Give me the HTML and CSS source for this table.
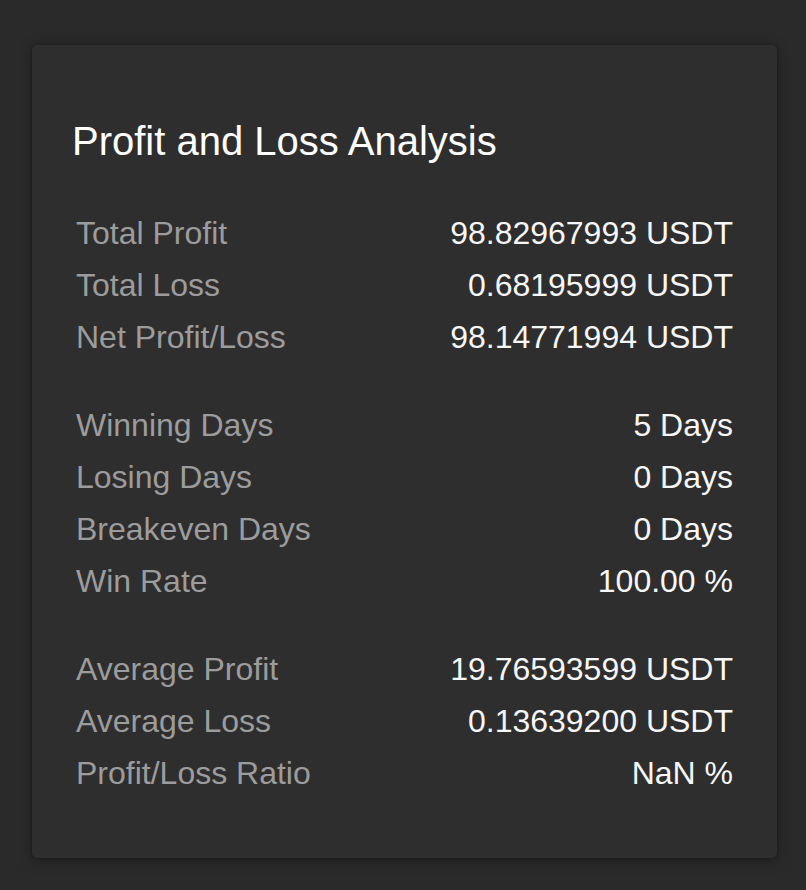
FILE: index.html
```html
<!DOCTYPE html>
<html lang="en">
<head>
<meta charset="utf-8">
<title>Profit and Loss Analysis</title>
<link rel="stylesheet" href="styles.css">
</head>
<body>
<section class="card">
  <h2 class="card-title">Profit and Loss Analysis</h2>
  <div class="groups">
    <dl class="group">
      <div class="row"><dt>Total Profit</dt><dd>98.82967993 USDT</dd></div>
      <div class="row"><dt>Total Loss</dt><dd>0.68195999 USDT</dd></div>
      <div class="row"><dt>Net Profit/Loss</dt><dd>98.14771994 USDT</dd></div>
    </dl>
    <dl class="group">
      <div class="row"><dt>Winning Days</dt><dd>5 Days</dd></div>
      <div class="row"><dt>Losing Days</dt><dd>0 Days</dd></div>
      <div class="row"><dt>Breakeven Days</dt><dd>0 Days</dd></div>
      <div class="row"><dt>Win Rate</dt><dd>100.00 %</dd></div>
    </dl>
    <dl class="group">
      <div class="row"><dt>Average Profit</dt><dd>19.76593599 USDT</dd></div>
      <div class="row"><dt>Average Loss</dt><dd>0.13639200 USDT</dd></div>
      <div class="row"><dt>Profit/Loss Ratio</dt><dd>NaN %</dd></div>
    </dl>
  </div>
</section>
</body>
</html>
```
FILE: styles.css
```css
html, body {
  margin: 0;
  padding: 0;
}
body {
  background: #2a2a2a;
  font-family: "Liberation Sans", Arial, Helvetica, sans-serif;
  padding: 45px 29px 0 32px;
  min-height: 890px;
  box-sizing: border-box;
}
.card {
  width: 745px;
  height: 813px;
  box-sizing: border-box;
  background: #2e2e2e;
  border-radius: 5px;
  box-shadow: 0 2px 14px rgba(0, 0, 0, 0.35), 0 0 3px rgba(0, 0, 0, 0.3);
  padding: 72px 38px 0 38px;
}
.card-title {
  margin: 0 0 0 2px;
  font-size: 40px;
  line-height: 48px;
  font-weight: normal;
  color: #ffffff;
}
.groups {
  margin-top: 42px;
  padding: 0 6px;
  display: flex;
  flex-direction: column;
  gap: 36px;
}
.group {
  margin: 0;
  display: flex;
  flex-direction: column;
}
.row {
  display: flex;
  justify-content: space-between;
  align-items: center;
  height: 52px;
  font-size: 32px;
  line-height: 52px;
}
.row dt {
  color: #9c9c9c;
}
.row dd {
  margin: 0;
  color: #f7f7f7;
  text-align: right;
}
```
